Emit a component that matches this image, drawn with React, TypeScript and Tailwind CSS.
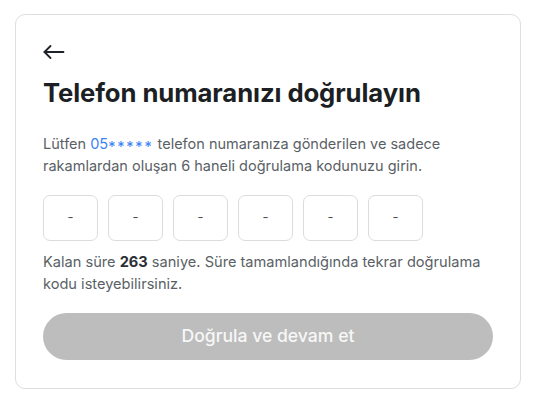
import React from "react";

export default function App() {
  const boxes = [0, 1, 2, 3, 4, 5];
  return (
    <div className="min-h-[401px] w-[536px] bg-white pl-[15px] pt-[14px]" style={{ fontFamily: "Inter, 'Noto Sans', sans-serif" }}>
      <div className="w-[506px] h-[375px] rounded-[10px] border border-[#dedede] bg-white px-[27px] pt-[25px] pb-[27px] flex flex-col">
        <button className="w-[24px] h-[24px] flex items-center text-[#1f2329]">
          <svg width="22" height="14" viewBox="0 0 22 14" fill="none" stroke="currentColor" strokeWidth="1.8" strokeLinecap="round" strokeLinejoin="round">
            <path d="M20.5 7H1.5" />
            <path d="M7.5 1L1.5 7l6 6" />
          </svg>
        </button>
        <h1 className="mt-[13px] text-[25.7px] leading-[32px] font-bold text-[#1c1f24] tracking-[-0.1px]">
          Telefon numaranızı doğrulayın
        </h1>
        <p className="mt-[24px] text-[14.5px] leading-[22px] text-[#5a5f66]">
          Lütfen <span className="text-[#3b82f6]">05<span className="relative top-[3px] tracking-[1.8px]">*****</span></span> telefon numaranıza gönderilen ve sadece rakamlardan oluşan 6 haneli doğrulama kodunuzu girin.
        </p>
        <div className="mt-[18px] flex gap-[10px]">
          {boxes.map((b) => (
            <div key={b} className="w-[55px] h-[46px] rounded-[7px] border border-[#dcdcdc] flex items-center justify-center text-[13px] text-[#4b5058]">
              -
            </div>
          ))}
        </div>
        <p className="mt-[10px] text-[14.6px] leading-[22px] text-[#5a5f66]">
          Kalan süre <span className="font-bold text-[#2b2f35]">263</span> saniye. Süre tamamlandığında tekrar doğrulama kodu isteyebilirsiniz.
        </p>
        <button className="mt-[18px] h-[47px] w-full rounded-full bg-[#bdbdbd] text-[17.6px] font-medium text-[#f7f7f7]">
          Doğrula ve devam et
        </button>
      </div>
    </div>
  );
}
